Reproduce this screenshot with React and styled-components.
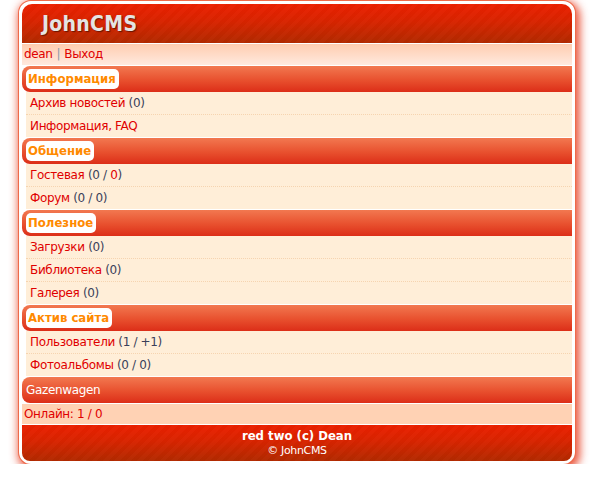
import React from "react";
import styled, { createGlobalStyle } from "styled-components";

const Global = createGlobalStyle`
  html, body { margin: 0; padding: 0; background: #fff; }
  body { font-family: "DejaVu Sans", Verdana, sans-serif; font-size: 12px; letter-spacing: -0.35px; }
`;

const Frame = styled.div`
  width: 550px;
  margin: 1px 0 0 19px;
  border: 3px solid #fff;
  border-radius: 12px;
  background: #fff;
  box-shadow: 0 0 0 1px #ee6a4a, 2px 3px 8px 3px rgba(230, 60, 30, 0.85);
`;

const stripes = `
  repeating-linear-gradient(-45deg, rgba(255,255,255,0.015) 0 4px, rgba(0,0,0,0.015) 4px 8px),
  linear-gradient(#ec2000, #d82400 45%, #b22a00)
`;

const Header = styled.div`
  height: 39px;
  border-radius: 10px 10px 0 0;
  background: ${stripes};
  display: flex;
  align-items: center;
  padding-left: 20px;
  border-bottom: 1px solid #fff;
`;

const Logo = styled.div`
  font-family: "DejaVu Sans Condensed", "DejaVu Sans", sans-serif;
  font-weight: bold;
  font-size: 21px;
  letter-spacing: 0.3px;
  color: #e4e4e4;
  text-shadow: 1px 1px 1px #6a1500;
`;

const UserBar = styled.div`
  height: 21px;
  line-height: 20px;
  padding-left: 2px;
  background: linear-gradient(#ffcdb0, #ffe9de);
  color: #d00;
`;

const Sep = styled.span`
  color: #8899aa;
  margin: 0 4px;
`;

const Link = styled.a`
  color: #e00000;
  text-decoration: none;
`;

const Count = styled.span`
  color: #3a3f5a;
`;

const SectionBar = styled.div`
  height: 26px;
  margin-top: 1px;
  border-radius: 8px 0 0 8px;
  background: linear-gradient(#f27850, #e8502e 55%, #dc2e18);
  display: flex;
  align-items: center;
  padding-left: 4px;
  color: #fff;
`;

const Label = styled.span`
  background: #fff;
  border-radius: 5px;
  padding: 0 3px 0 2px;
  height: 20px;
  line-height: 20px;
  color: #ff8a00;
  font-family: "DejaVu Sans Condensed", "DejaVu Sans", sans-serif;
  font-weight: bold;
  font-size: 13px;
  letter-spacing: 0;
`;

const List = styled.div`
  margin-left: 4px;
`;

const Row = styled.div`
  height: 22px;
  line-height: 22px;
  padding-left: 4px;
  background: #ffeed8;
  border-bottom: 1px dotted #f6d4b0;
  &:last-child { border-bottom: none; }
`;

const Online = styled.div`
  height: 20px;
  line-height: 20px;
  margin-top: 1px;
  padding-left: 2px;
  background: #ffd2b4;
  color: #e00000;
  border-bottom: 1px solid #fff;
`;

const Footer = styled.div`
  height: 36px;
  border-radius: 0 0 8px 8px;
  background: ${stripes};
  color: #fff;
  text-align: center;
  padding-top: 2px;
  box-sizing: border-box;
`;

const FooterTitle = styled.div`
  font-family: "DejaVu Sans Condensed", "DejaVu Sans", sans-serif;
  font-weight: bold;
  font-size: 13px;
  letter-spacing: 0;
  line-height: 17px;
`;

const FooterSub = styled.div`
  font-size: 11px;
  line-height: 14px;
`;

const sections = [
  { title: "Информация", rows: [["Архив новостей", " (0)"], ["Информация, FAQ", null]] },
  { title: "Общение", rows: [["Гостевая", "g"], ["Форум", " (0 / 0)"]] },
  { title: "Полезное", rows: [["Загрузки", " (0)"], ["Библиотека", " (0)"], ["Галерея", " (0)"]] },
  { title: "Актив сайта", rows: [["Пользователи", " (1 / +1)"], ["Фотоальбомы", " (0 / 0)"]] },
];

export default function App() {
  return (
    <>
      <Global />
      <Frame>
        <Header><Logo>JohnCMS</Logo></Header>
        <UserBar>
          <Link href="#">dean</Link><Sep>|</Sep><Link href="#">Выход</Link>
        </UserBar>
        {sections.map((s) => (
          <React.Fragment key={s.title}>
            <SectionBar><Label>{s.title}</Label></SectionBar>
            <List>
              {s.rows.map(([name, count]) => (
                <Row key={name}>
                  <Link href="#">{name}</Link>
                  {count === "g" ? (
                    <Count> (0 / <Link href="#">0</Link>)</Count>
                  ) : (
                    count && <Count>{count}</Count>
                  )}
                </Row>
              ))}
            </List>
          </React.Fragment>
        ))}
        <SectionBar>Gazenwagen</SectionBar>
        <Online>Онлайн: 1 / 0</Online>
        <Footer>
          <FooterTitle>red two (c) Dean</FooterTitle>
          <FooterSub>© JohnCMS</FooterSub>
        </Footer>
      </Frame>
    </>
  );
}
